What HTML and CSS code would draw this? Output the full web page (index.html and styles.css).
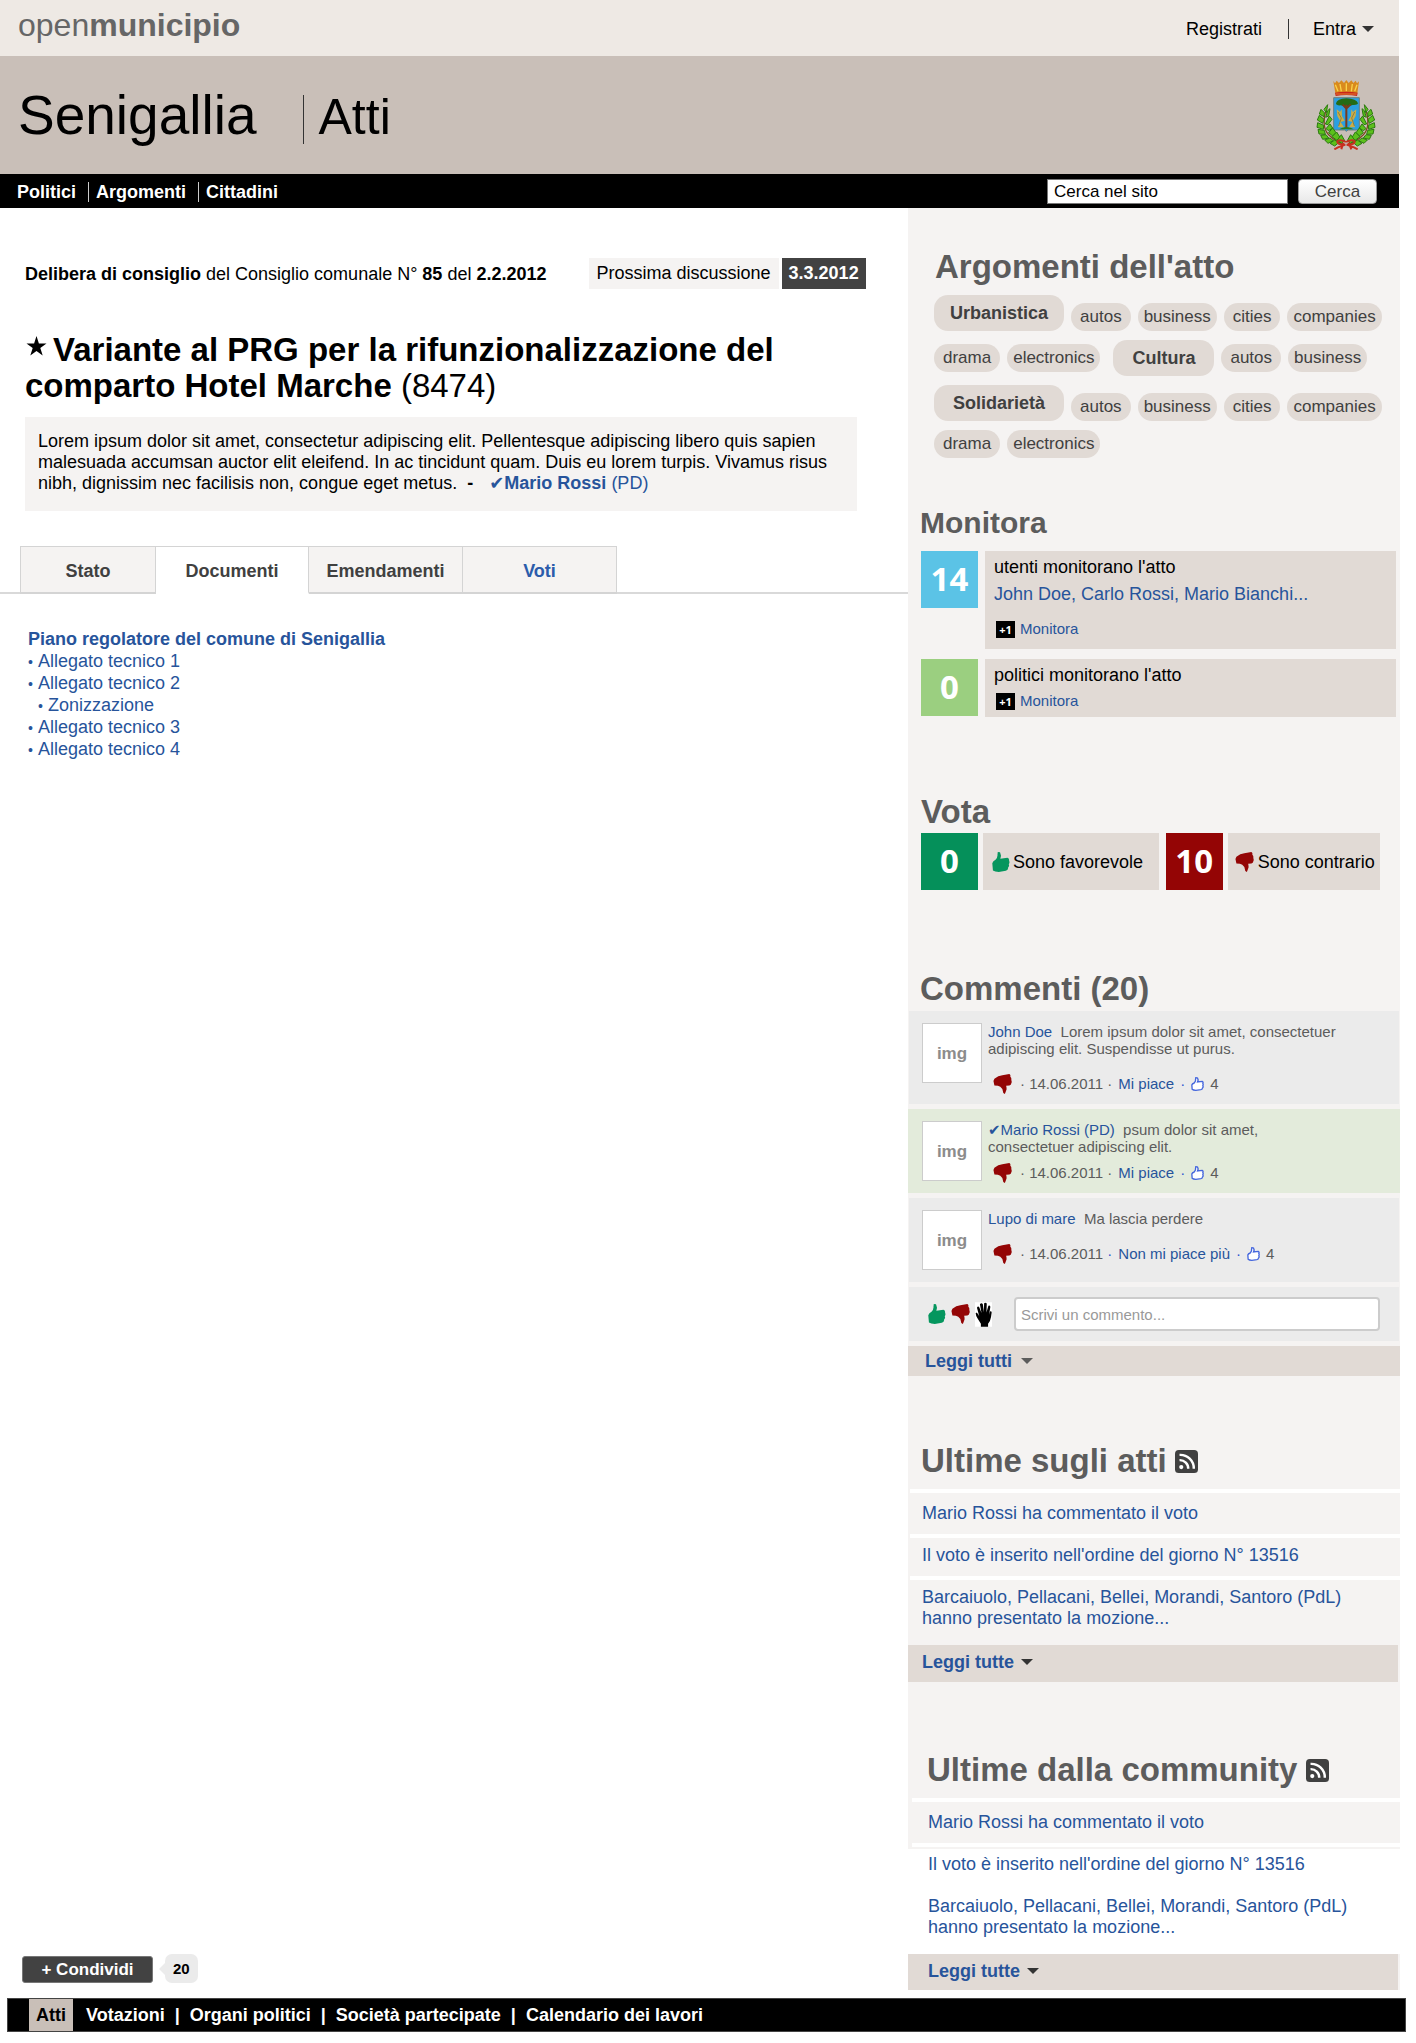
FILE: index.html
```html
<!DOCTYPE html>
<html lang="it">
<head>
<meta charset="utf-8">
<meta name="viewport" content="width=device-width, initial-scale=1">
<title>Senigallia - Atti</title>
<link rel="stylesheet" href="styles.css">
</head>
<body>
<svg class="sprite" aria-hidden="true">
  <symbol id="thumb-up" viewBox="0 0 54 62">
    <path d="M17 0L24 1L27 12L25 21L47 18Q53 19 52 27Q55 33 51 38Q54 44 49 48Q50 56 42 58L20 62Q8 61 2 57L0 35Q2 28 10 24Q17 16 16 9Z"/>
  </symbol>
  <symbol id="thumb-down" viewBox="0 0 57 63">
    <path d="M0 22L3 15Q15 5 28 4L50 0Q55 3 53 9Q58 13 56 19Q59 24 56 30Q56 35 50 36L40 37Q42 45 41 50L36 63L31 60L28 47Q22 38 14 37L3 36Z"/>
  </symbol>
  <symbol id="like" viewBox="0 0 38 42">
    <path d="M14 2L19 3L21 9L19 15L33 13Q37 15 35 19Q37 23 35 26Q37 30 34 33Q34 37 29 38L14 40Q6 40 3 37L2 24Q3 20 9 18Q14 12 13 8Z" fill="#fff" stroke="#4466dd" stroke-width="4"/>
  </symbol>
  <symbol id="hand" viewBox="0 0 52 75">
    <path d="M0 0H52V75H0Z" fill="#fff"/>
    <path d="M18 75V66L8 50Q2 40 2 34L4 31Q9 32 13 43L6 17Q9 10 13 15L20 33L15 6Q20 0 24 6L27 30L28 3Q32 -1 36 4L35 31L41 11Q45 8 47 14L43 38L46 28Q51 27 51 31L49 45Q47 58 40 66V75Z"/>
  </symbol>
  <symbol id="rss" viewBox="0 0 66 66">
    <rect width="66" height="66" rx="11" fill="#404040"/>
    <circle cx="18" cy="49" r="6" fill="#fff"/>
    <path d="M13 29A24 24 0 0 1 38 54M13 14A39 39 0 0 1 54 54" fill="none" stroke="#fff" stroke-width="7"/>
  </symbol>
</svg>

<div class="page">
  <header class="header">
    <div class="topbar">
      <a class="logo" href="#">open<b>municipio</b></a>
      <div class="account">
        <a href="#">Registrati</a>
        <button class="account__login" type="button">Entra <span class="caret"></span></button>
      </div>
    </div>
    <div class="brand">
      <h1 class="brand__city">Senigallia</h1>
      <p class="brand__area">Atti</p>
      <svg class="crest" viewBox="0 0 180 210" role="img" aria-label="Stemma di Senigallia">
        <path d="M52 3L57 10L62 2L69 9L76 1L84 9L91 0L98 9L106 1L112 9L119 2L123 10L129 4L124 40H58Z" fill="#d98a1e"/>
        <path d="M58 14L66 34M72 12L76 34M91 10V34M109 12L106 34M123 14L116 34" stroke="#f9d34c" stroke-width="4"/>
        <path d="M57 38Q91 32 125 38L123 48Q91 42 59 48Z" fill="#c9241b"/>
        <path d="M60 42H122" stroke="#f0b030" stroke-width="2"/>
        <path d="M53 53H130V150H96L91 154L86 150H53Z" fill="#2b9fe0" stroke="#6d7f7c" stroke-width="3"/>
        <path d="M60 70Q63 56 91 55Q122 56 126 70Q124 76 110 75Q91 82 74 76Q60 77 60 70Z" fill="#246b16"/>
        <path d="M91 74V145M80 74L91 86L104 73" stroke="#7a3a1c" stroke-width="6" fill="none"/>
        <path d="M70 148Q91 134 113 148Z" fill="#2b7d18"/>
        <path d="M62 88L72 96L77 88L78 108L86 122L74 126L84 142H66L72 122L64 108Z" fill="#c9ad4a"/>
        <path d="M121 88L111 96L106 88L105 108L97 122L109 126L99 142H117L111 122L119 108Z" fill="#c9ad4a"/>
        <path d="M66 96L76 114L68 138M116 96L107 114L115 138" stroke="#756a34" stroke-width="2" fill="none"/>
        <path d="M32 84Q14 140 38 164T84 192M148 84Q166 140 142 164T96 192" fill="none" stroke="#7b4a20" stroke-width="4"/>
        <g fill="#5cc11c" stroke="#2c7a10" stroke-width="3" stroke-linejoin="round">
          <g id="branch">
            <path d="M35 74L24 88L31 98Z"/><path d="M35 92L42 86L38 108L29 112Z"/>
            <path d="M15 88L10 102L24 110L25 98Z"/><path d="M10 106L4 120L20 130L24 118Z"/>
            <path d="M5 128L3 142L22 148L23 136Z"/><path d="M6 148L9 162L28 163L25 151Z"/>
            <path d="M14 166L20 178L38 174L30 164Z"/><path d="M26 180L36 190L52 182L42 174Z"/>
            <path d="M42 190L56 198L68 188L56 180Z"/><path d="M40 108L48 118L36 134L28 132Z"/>
            <path d="M42 132L50 144L38 152L30 146Z"/><path d="M50 144L60 158L50 168L38 158Z"/>
            <path d="M62 156L72 172L64 182L48 170Z"/><path d="M76 164L86 182L76 190L64 180Z"/>
          </g>
          <use href="#branch" transform="matrix(-1 0 0 1 180 0)"/>
        </g>
        <path d="M90 186Q72 176 64 184Q62 194 88 194L66 202L55 208M90 186Q108 176 116 184Q118 194 92 194L114 202L125 208M82 188L76 208M98 188L106 208" fill="none" stroke="#c8301f" stroke-width="6"/>
      </svg>
    </div>
    <div class="navbar">
      <nav>
        <ul class="navbar__list">
          <li><a href="#">Politici</a></li>
          <li><a href="#">Argomenti</a></li>
          <li><a href="#">Cittadini</a></li>
        </ul>
      </nav>
      <form class="search">
        <input class="search__field" type="text" value="Cerca nel sito" aria-label="Cerca nel sito">
        <button class="search__button" type="button">Cerca</button>
      </form>
    </div>
  </header>

  <div class="columns">
    <main class="main">
      <div class="act">
        <div class="act__meta">
          <p><b>Delibera di consiglio</b> del Consiglio comunale N° <b>85</b> del <b>2.2.2012</b></p>
          <p class="next"><span class="next__label">Prossima discussione</span><b class="next__date">3.3.2012</b></p>
        </div>
        <h2 class="act__title"><svg class="star" viewBox="0 0 20 20" aria-hidden="true"><path d="M10 0L12.4 7.5H20L13.8 12.1L16.2 19.5L10 15L3.8 19.5L6.2 12.1L0 7.5H7.6Z"/></svg>Variante al PRG per la rifunzionalizzazione del comparto Hotel Marche <span>(8474)</span></h2>
        <p class="act__summary">Lorem ipsum dolor sit amet, consectetur adipiscing elit. Pellentesque adipiscing libero quis sapien malesuada accumsan auctor elit eleifend. In ac tincidunt quam. Duis eu lorem turpis. Vivamus risus nibh, dignissim nec facilisis non, congue eget metus. <b class="dash">-</b> <a href="#"><span class="check">✔</span><b>Mario Rossi</b> (PD)</a></p>
      </div>
      <nav class="tabs">
        <a class="tab tab--first" href="#">Stato</a>
        <a class="tab tab--active" href="#" aria-current="page">Documenti</a>
        <a class="tab" href="#">Emendamenti</a>
        <a class="tab tab--link" href="#">Voti</a>
      </nav>
      <div class="documents">
        <a href="#"><b>Piano regolatore del comune di Senigallia</b></a>
        <ul>
          <li><a href="#">Allegato tecnico 1</a></li>
          <li><a href="#">Allegato tecnico 2</a>
            <ul><li><a href="#">Zonizzazione</a></li></ul>
          </li>
          <li><a href="#">Allegato tecnico 3</a></li>
          <li><a href="#">Allegato tecnico 4</a></li>
        </ul>
      </div>
      <div class="share">
        <button class="share__button" type="button">+ Condividi</button>
        <span class="share__count">20</span>
      </div>
    </main>

    <aside class="side">
      <section class="block topics">
        <h2>Argomenti dell'atto</h2>
        <ul class="tags">
          <li><a class="tag tag--topic" href="#">Urbanistica</a></li>
          <li><a class="tag" href="#">autos</a></li>
          <li><a class="tag tag--long" href="#">business</a></li>
          <li><a class="tag" href="#">cities</a></li>
          <li><a class="tag tag--long" href="#">companies</a></li>
          <li class="mid"><a class="tag" href="#">drama</a></li>
          <li class="mid"><a class="tag tag--long" href="#">electronics</a></li>
          <li class="apart"><a class="tag tag--topic tag--wide" href="#">Cultura</a></li>
          <li class="mid"><a class="tag" href="#">autos</a></li>
          <li class="mid"><a class="tag tag--long" href="#">business</a></li>
          <li><a class="tag tag--topic tag--wide" href="#">Solidarietà</a></li>
          <li><a class="tag" href="#">autos</a></li>
          <li><a class="tag tag--long" href="#">business</a></li>
          <li><a class="tag" href="#">cities</a></li>
          <li><a class="tag tag--long" href="#">companies</a></li>
          <li><a class="tag" href="#">drama</a></li>
          <li><a class="tag tag--long" href="#">electronics</a></li>
        </ul>
      </section>

      <section class="block monitor">
        <h2>Monitora</h2>
        <div class="monitor__row">
          <strong class="count count--blue">14</strong>
          <div class="panel">
            <p>utenti monitorano l'atto</p>
            <p class="panel__names"><a href="#">John Doe, Carlo Rossi, Mario Bianchi...</a></p>
            <a class="plus plus--low" href="#"><span class="plus__badge">+1</span>Monitora</a>
          </div>
        </div>
        <div class="monitor__row">
          <strong class="count count--lime">0</strong>
          <div class="panel">
            <p>politici monitorano l'atto</p>
            <a class="plus" href="#"><span class="plus__badge">+1</span>Monitora</a>
          </div>
        </div>
      </section>

      <section class="block vote">
        <h2>Vota</h2>
        <div class="vote__row">
          <strong class="count count--green">0</strong>
          <button class="vote__button vote__button--yes" type="button"><svg class="thumb thumb--up"><use href="#thumb-up"/></svg>Sono favorevole</button>
          <strong class="count count--red">10</strong>
          <button class="vote__button" type="button"><svg class="thumb thumb--down"><use href="#thumb-down"/></svg>Sono contrario</button>
        </div>
      </section>

      <section class="block comments">
        <h2>Commenti (20)</h2>
        <article class="comment">
          <div class="avatar">img</div>
          <div class="comment__body">
            <p><a href="#">John Doe</a>&nbsp; Lorem ipsum dolor sit amet, consectetuer adipiscing elit. Suspendisse ut purus.</p>
            <div class="meta"><svg class="thumb thumb--down"><use href="#thumb-down"/></svg><span>· 14.06.2011 ·</span><a href="#">Mi piace</a><i>·</i><svg class="like"><use href="#like"/></svg><span>4</span></div>
          </div>
        </article>
        <article class="comment comment--author">
          <div class="avatar">img</div>
          <div class="comment__body">
            <p><a href="#"><span class="check">✔</span>Mario Rossi (PD)</a>&nbsp; psum dolor sit amet, consectetuer adipiscing elit.</p>
            <div class="meta"><svg class="thumb thumb--down"><use href="#thumb-down"/></svg><span>· 14.06.2011 ·</span><a href="#">Mi piace</a><i>·</i><svg class="like"><use href="#like"/></svg><span>4</span></div>
          </div>
        </article>
        <article class="comment">
          <div class="avatar">img</div>
          <div class="comment__body">
            <p><a href="#">Lupo di mare</a>&nbsp; Ma lascia perdere</p>
            <div class="meta"><svg class="thumb thumb--down"><use href="#thumb-down"/></svg><span>· 14.06.2011 <i>·</i></span><a href="#">Non mi piace più</a><i>·</i><svg class="like"><use href="#like"/></svg><span>4</span></div>
          </div>
        </article>
        <form class="reply">
          <svg class="thumb thumb--up"><use href="#thumb-up"/></svg>
          <svg class="thumb thumb--down"><use href="#thumb-down"/></svg>
          <svg class="hand"><use href="#hand"/></svg>
          <input class="reply__field" type="text" placeholder="Scrivi un commento..." aria-label="Scrivi un commento">
        </form>
        <a class="more more--slim" href="#">Leggi tutti <span class="caret"></span></a>
      </section>

      <section class="block feed">
        <h2>Ultime sugli atti <svg class="rss"><use href="#rss"/></svg></h2>
        <ul>
          <li><a href="#">Mario Rossi ha commentato il voto</a></li>
          <li><a href="#">Il voto è inserito nell'ordine del giorno N° 13516</a></li>
          <li><a href="#">Barcaiuolo, Pellacani, Bellei, Morandi, Santoro (PdL) hanno presentato la mozione...</a></li>
        </ul>
        <a class="more" href="#">Leggi tutte <span class="caret"></span></a>
      </section>

      <section class="block feed feed--community">
        <h2>Ultime dalla community <svg class="rss"><use href="#rss"/></svg></h2>
        <ul>
          <li><a href="#">Mario Rossi ha commentato il voto</a></li>
          <li><a href="#">Il voto è inserito nell'ordine del giorno N° 13516</a></li>
          <li><a href="#">Barcaiuolo, Pellacani, Bellei, Morandi, Santoro (PdL) hanno presentato la mozione...</a></li>
        </ul>
        <a class="more" href="#">Leggi tutte <span class="caret"></span></a>
      </section>
    </aside>
  </div>
</div>

<footer class="footer">
  <nav>
    <a class="footer__current" href="#" aria-current="page">Atti</a>
    <a href="#">Votazioni</a><span>|</span>
    <a href="#">Organi politici</a><span>|</span>
    <a href="#">Società partecipate</a><span>|</span>
    <a href="#">Calendario dei lavori</a>
  </nav>
</footer>
</body>
</html>
```
FILE: styles.css
```css
:root {
  --link: #27549b;
  --pale: #f5f3f2;
  --sand: #e1dad5;
  --taupe: #c9bfb8;
  --grey: #ebebeb;
  --ink: #404040;
  --heading: #5c5c5c;
}

* { box-sizing: border-box; }

body {
  margin: 0;
  background: #fff;
  color: #000;
  font: 18px/22px "Liberation Sans", Arial, Helvetica, sans-serif;
}

h1, h2, p, ul { margin: 0; padding: 0; font-weight: normal; }
ul { list-style: none; }
a { color: var(--link); text-decoration: none; }
button, input { font: inherit; color: inherit; margin: 0; }
button { cursor: pointer; }
i { font-style: normal; color: #2f55d0; }
svg { flex: none; }

.sprite { display: none; }
.page { padding-right: 16px; }

.caret {
  display: inline-block;
  border: 6px solid transparent;
  border-top-color: #333;
  border-bottom: 0;
}

/* Header */
.header { margin-right: 1px; }

.topbar {
  display: flex;
  justify-content: space-between;
  align-items: flex-start;
  height: 56px;
  padding: 0 25px 0 18px;
  background: #eee9e4;
}
.logo { color: #666; font-size: 32px; line-height: 50px; }
.account { display: flex; gap: 26px; padding-top: 19px; line-height: 20px; }
.account a { color: #000; }
.account__login {
  display: flex;
  align-items: center;
  gap: 6px;
  padding: 0 0 0 24px;
  border: 0;
  border-left: 1px solid #333;
  background: none;
}

.brand {
  display: flex;
  align-items: baseline;
  height: 118px;
  padding: 0 23px 0 18px;
  background: var(--taupe);
}
.brand__city { font-size: 55px; line-height: 118px; }
.brand__area {
  margin-left: 46px;
  padding: 0 0 5px 15px;
  border-left: 1px solid #333;
  font-size: 50px;
  line-height: 44px;
}
.crest { align-self: center; width: 60px; height: 70px; margin-left: auto; }

.navbar {
  display: flex;
  justify-content: space-between;
  align-items: center;
  height: 34px;
  padding: 1px 22px 0 17px;
  background: #000;
}
.navbar__list { display: flex; line-height: 20px; font-weight: bold; }
.navbar__list a { color: #fff; }
.navbar__list li + li { margin-left: 12px; padding-left: 7px; border-left: 1px solid #ccc; }
.search { display: flex; gap: 10px; font-size: 17px; }
.search__field {
  width: 241px;
  height: 25px;
  padding: 0 6px;
  border: 1px solid #777;
  background: #fff;
}
.search__button {
  width: 79px;
  height: 25px;
  padding: 0;
  border: 1px solid #999;
  border-radius: 4px;
  background: linear-gradient(#fff, #e8e8e8);
  color: var(--ink);
}

/* Columns */
.columns { display: grid; grid-template-columns: minmax(0, 1fr) 492px; }
.main { display: flex; flex-direction: column; padding: 50px 0 7px; }

.act { padding: 0 51px 0 25px; }
.act__meta { display: flex; align-items: center; gap: 42px; margin-right: -20px; white-space: nowrap; }
.next { display: flex; gap: 3px; line-height: 31px; }
.next__label { padding: 0 8px; background: var(--pale); }
.next__date { padding: 0 7px; background: #424242; color: #fff; }
.act__title { margin-top: 43px; font-size: 33px; line-height: 36px; font-weight: bold; }
.act__title span { font-weight: normal; }
.star { width: 21px; height: 20px; margin: 0 6px 5px 1px; vertical-align: baseline; }
.act__summary {
  margin-top: 13px;
  padding: 14px 5px 17px 13px;
  background: var(--pale);
  line-height: 21px;
}
.dash { margin: 0 11px 0 5px; }
.check { font-family: "DejaVu Sans", sans-serif; line-height: 1; }

.tabs { display: flex; margin-top: 35px; padding-left: 20px; border-bottom: 2px solid #d9d9d9; }
.tab {
  width: 154px;
  height: 48px;
  margin-bottom: -2px;
  border: solid #d4d4d4;
  border-width: 1px 1px 2px 0;
  background: var(--pale);
  color: var(--ink);
  font-weight: bold;
  line-height: 48px;
  text-align: center;
}
.tab--first { width: 136px; border-left-width: 1px; }
.tab--active { width: 153px; background: #fff; border-bottom-color: #fff; }
.tab--link { color: #2b5cab; }

.documents { padding: 34px 28px; color: var(--link); }
.documents li::before { content: "•"; display: inline-block; width: 10px; font-size: 14px; line-height: 14px; }
.documents ul ul { padding-left: 10px; }

.share { display: flex; align-items: flex-end; gap: 12px; margin-top: auto; padding-left: 22px; font-weight: bold; }
.share__button {
  width: 131px;
  height: 27px;
  padding: 0;
  border: 1px solid #777;
  border-radius: 3px;
  background: #424242;
  color: #fff;
  font-size: 17px;
  line-height: 24px;
}
.share__count {
  position: relative;
  padding: 0 8px;
  border-radius: 7px;
  background: var(--grey);
  font-size: 15px;
  line-height: 29px;
}
.share__count::before {
  content: "";
  position: absolute;
  top: 9px;
  left: -6px;
  border: 6px solid transparent;
  border-right-color: var(--grey);
  border-left: 0;
}

/* Sidebar */
.block { background: var(--pale); }
.block h2 {
  padding-left: 13px;
  color: var(--heading);
  font-size: 33px;
  font-weight: bold;
  line-height: 38px;
}

.topics { padding-top: 40px; }
.topics h2 { padding-left: 27px; }
.tags {
  display: flex;
  flex-wrap: wrap;
  align-items: flex-end;
  gap: 9px 7px;
  padding: 9px 12px 0 26px;
}
.mid { align-self: center; }
.apart { margin-left: 6px; }
.tag {
  display: block;
  padding: 0 9px;
  border-radius: 14px;
  background: var(--sand);
  color: var(--ink);
  font-size: 17px;
  line-height: 28px;
}
.tag--long { padding: 0 6px; }
.tag--topic { padding: 0 16px; font-size: 18px; font-weight: bold; line-height: 36px; }
.tag--wide { padding: 0 19px; }

.monitor { padding-top: 46px; }
.monitor h2 { margin-bottom: 9px; padding-left: 12px; font-size: 30px; }
.monitor__row { display: flex; align-items: flex-start; gap: 7px; padding: 0 4px 0 13px; }
.monitor__row + .monitor__row { margin-top: 10px; }
.count {
  width: 57px;
  height: 57px;
  color: #fff;
  font: bold 33px/55px "Noto Sans", "Open Sans", sans-serif;
  text-align: center;
}
.count--blue { background: #5bc3e6; }
.count--lime { background: #9bcf80; }
.count--green { background: #05905a; }
.count--red { background: #940505; }
.panel { flex: 1; padding: 5px 9px 6px; background: var(--sand); }
.panel__names { margin-top: 5px; }
.plus { display: flex; align-items: center; gap: 5px; margin-top: 5px; font-size: 15px; line-height: 20px; }
.plus--low { margin: 14px 0 4px; }
.plus__badge {
  width: 19px;
  margin-left: 2px;
  background: #000;
  color: #fff;
  font: bold 11px/17px "Noto Sans", "Open Sans", sans-serif;
  text-align: center;
}

.thumb { width: 19px; height: 20px; }
.thumb--up { width: 18px; fill: #05965e; }
.thumb--down { fill: #940505; }

.vote { padding-top: 76px; }
.vote__row { display: flex; gap: 5px; padding: 2px 20px 0 13px; }
.vote__button {
  display: flex;
  flex: 1 0 auto;
  align-items: center;
  gap: 4px;
  padding: 0 0 0 7px;
  border: 0;
  background: var(--sand);
}
.vote__button--yes { flex-grow: 3; margin-right: 2px; gap: 3px; padding-left: 9px; }

.comments { padding-top: 80px; color: var(--heading); font-size: 15px; line-height: 17px; }
.comments h2 { margin-bottom: 3px; padding-left: 12px; }
.comment {
  display: flex;
  gap: 6px;
  margin: 0 1px 5px;
  padding: 12px 50px 10px 13px;
  background: var(--grey);
}
.comment--author { margin: 0 0 5px; padding-left: 14px; padding-right: 110px; background: #e3ebdb; }
.avatar {
  flex: none;
  width: 60px;
  height: 60px;
  margin-bottom: 2px;
  border: 1px solid #ccc;
  background: #fff;
  color: #8c8c8c;
  font-size: 17px;
  font-weight: bold;
  line-height: 59px;
  text-align: center;
}
.meta { display: flex; align-items: center; gap: 6px; margin-top: 17px; padding-left: 5px; line-height: 20px; }
.meta .thumb { margin-right: 2px; }
.comment--author .meta { margin-top: 8px; }
.like { width: 13px; height: 14px; }
.reply {
  display: flex;
  align-items: center;
  gap: 5px;
  height: 54px;
  margin: 0 1px 5px;
  padding: 0 19px;
  background: var(--grey);
}
.hand { width: 17px; height: 25px; }
.reply__field {
  flex: 1;
  height: 34px;
  margin-left: 17px;
  padding: 0 5px;
  border: 2px solid #ccc;
  border-radius: 4px;
  background: #fff;
}
.reply__field::placeholder { color: #999; opacity: 1; }

.more {
  display: flex;
  align-items: center;
  gap: 7px;
  height: 37px;
  margin-right: 2px;
  padding: 0 14px 3px;
  background: var(--sand);
  font-size: 18px;
  font-weight: bold;
}
.more--slim { height: 30px; margin-right: 0; padding: 0 17px; gap: 9px; }
.more--slim .caret { border-top-color: #5c5c5c; }

.feed { padding-top: 66px; }
.feed h2 { display: flex; align-items: center; gap: 8px; margin-bottom: 9px; }
.feed ul { padding-bottom: 6px; line-height: 21px; }
.feed li { margin-left: 2px; padding: 7px 40px 10px 12px; border-top: 4px solid #fff; }
.feed li:first-child { padding-top: 10px; }
.rss { width: 23px; height: 23px; }

.feed--community { padding-top: 69px; }
.feed--community h2 { padding-left: 19px; gap: 9px; }
.feed--community li { margin-left: 4px; padding-left: 16px; }
.feed--community ul { background: linear-gradient(var(--pale) 51px, #fff 51px); }
.feed--community .more { height: 36px; padding-left: 20px; }

/* Footer */
.footer { padding: 8px 10px 11px 7px; background: #fff; }
.footer nav {
  display: flex;
  align-items: center;
  gap: 10px;
  padding-left: 21px;
  border: 1px solid #444;
  background: #000;
  color: #fff;
  font-weight: bold;
  line-height: 32px;
}
.footer a { color: #fff; }
.footer .footer__current { margin-right: 3px; padding: 0 7px; background: var(--taupe); color: #000; }
```
